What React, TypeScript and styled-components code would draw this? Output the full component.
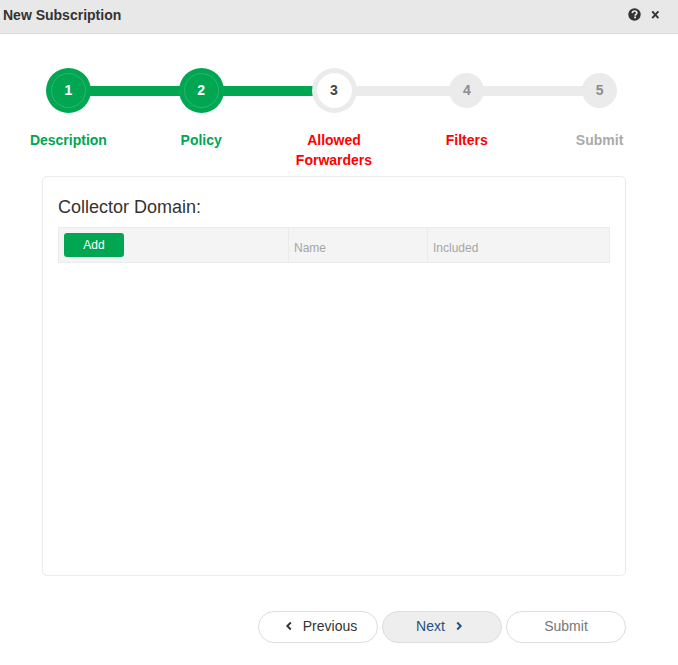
import React from "react";
import styled, { createGlobalStyle, css } from "styled-components";

const GlobalStyle = createGlobalStyle`
  *, *::before, *::after { box-sizing: border-box; }
  body {
    margin: 0;
    background: #fff;
    color: #333;
    font-family: "Liberation Sans", Arial, Helvetica, sans-serif;
    font-size: 14px;
    line-height: 20px;
  }
  button { font-family: inherit; cursor: pointer; }
`;

const green = "#00a651";
const grey = "#ebebeb";

const Dialog = styled.section`
  display: flex;
  flex-direction: column;
  min-height: 100vh;
`;

const TitleBar = styled.header`
  display: flex;
  align-items: center;
  justify-content: space-between;
  height: 34px;
  padding: 0 17px 4px 3px;
  background: #e8e8e8;
  border-bottom: 1px solid #dadada;
`;

const Title = styled.h1`
  margin: 0;
  font-size: 14px;
  line-height: 20px;
`;

const TitleActions = styled.div`
  display: flex;
  align-items: center;
  gap: 8px;
`;

const IconButton = styled.button`
  display: flex;
  padding: 0;
  border: 0;
  background: none;
  color: #333;
`;

const Steps = styled.ol`
  display: grid;
  grid-template-columns: repeat(5, 1fr);
  margin: 0;
  padding: 34px 12px 0 2px;
  list-style: none;
`;

type StepState = "done" | "active" | "pending";
type LineColor = "green" | "grey" | "none";

const Step = styled.li`
  min-width: 0;
  text-align: center;
`;

const MarkerRow = styled.div`
  display: flex;
  align-items: center;
  height: 45px;
`;

const Line = styled.span<{ $color: LineColor }>`
  flex: 1;
  height: 10px;
  background: ${({ $color }) =>
    $color === "green" ? green : $color === "grey" ? grey : "transparent"};
`;

const markerStyles = {
  done: css`
    color: #fff;
    background: ${green};
    border-color: #2cb56e;
    box-shadow: 0 0 0 5px ${green};
  `,
  active: css`
    color: #444;
    background: #fff;
    border-color: #fff;
    box-shadow: 0 0 0 5px ${grey};
  `,
  pending: css`
    color: #8c8c91;
    background: ${grey};
    border-color: ${grey};
  `,
};

const Marker = styled.span<{ $state: StepState }>`
  position: relative;
  z-index: 1;
  width: 35px;
  height: 35px;
  margin: 0 -1px;
  border: 1px solid;
  border-radius: 50%;
  font-weight: bold;
  line-height: 33px;
  ${({ $state }) => markerStyles[$state]}
`;

const StepLabel = styled.div<{ $color: string }>`
  padding: 0 20px;
  margin-top: 17px;
  color: ${({ $color }) => $color};
  font-weight: bold;
`;

const Panel = styled.main`
  flex: 1;
  margin: 6px 52px 0 42px;
  padding: 20px 15px;
  border: 1px solid ${grey};
  border-radius: 5px;
`;

const PanelHeading = styled.h2`
  margin: 0 0 10px;
  font-size: 18px;
  font-weight: normal;
  line-height: 20px;
`;

const Table = styled.table`
  width: 100%;
  table-layout: fixed;
  border-collapse: collapse;
`;

const HeadCell = styled.th<{ $width?: string }>`
  width: ${({ $width }) => $width ?? "auto"};
  height: 35px;
  padding: 5px;
  border: 1px solid ${grey};
  background: #f4f4f4;
  color: #a6a6a6;
  font-size: 12px;
  font-weight: normal;
  line-height: 18px;
  text-align: left;
  vertical-align: bottom;
`;

const AddButton = styled.button`
  display: block;
  width: 60px;
  height: 24px;
  padding: 0;
  border: 0;
  border-radius: 3px;
  background: ${green};
  color: #fff;
  font-size: 12px;
`;

const Footer = styled.footer`
  display: flex;
  justify-content: flex-end;
  gap: 4px;
  padding: 35px 52px 22px 42px;
`;

const pillTones = {
  previous: css`
    padding-left: 6px;
    background: #fff;
    color: #333;
  `,
  next: css`
    padding-right: 5px;
    background: #eee;
    color: #1f5180;
  `,
  submit: css`
    background: #fff;
    color: #777;
  `,
};

const PillButton = styled.button<{ $tone: keyof typeof pillTones }>`
  display: flex;
  align-items: center;
  justify-content: center;
  gap: 10px;
  width: 120px;
  height: 32px;
  padding: 0 0 2px;
  border: 1px solid #ddd;
  border-radius: 16px;
  font-size: 14px;
  ${({ $tone }) => pillTones[$tone]}
`;

const HelpIcon = () => (
  <svg width="13" height="13" viewBox="0 0 13 13" aria-hidden="true">
    <circle cx="6.5" cy="6.5" r="6.2" fill="#333" />
    <path d="M4.3 5.1C4.4 3.7 5.2 3 6.5 3s2.3.8 2.3 1.9c0 1.4-1.7 1.5-1.7 2.9" fill="none" stroke="#e8e8e8" strokeWidth="1.7" />
    <path d="M6.2 8.6H8v1.6H6.2z" fill="#e8e8e8" />
  </svg>
);

const CloseIcon = () => (
  <svg width="12" height="12" viewBox="0 0 12 12" aria-hidden="true">
    <path d="M3.2 2.4l6.2 6.8M9.4 2.4L3.2 9.2" fill="none" stroke="currentColor" strokeWidth="1.9" />
  </svg>
);

const Chevron = ({ left = false }: { left?: boolean }) => (
  <svg width="8" height="10" viewBox="0 0 8 10" aria-hidden="true">
    <path d={left ? "M5.8 1.5L2.3 5l3.5 3.5" : "M2.2 1.5L5.7 5 2.2 8.5"} fill="none" stroke="currentColor" strokeWidth="1.9" />
  </svg>
);

const steps: {
  label: string;
  state: StepState;
  color: string;
  before: LineColor;
  after: LineColor;
}[] = [
  { label: "Description", state: "done", color: green, before: "none", after: "green" },
  { label: "Policy", state: "done", color: green, before: "green", after: "green" },
  { label: "Allowed Forwarders", state: "active", color: "#f00", before: "green", after: "grey" },
  { label: "Filters", state: "pending", color: "#f00", before: "grey", after: "grey" },
  { label: "Submit", state: "pending", color: "#aaa", before: "grey", after: "none" },
];

export default function App() {
  return (
    <>
      <GlobalStyle />
      <Dialog aria-labelledby="dialog-title">
        <TitleBar>
          <Title id="dialog-title">New Subscription</Title>
          <TitleActions>
            <IconButton type="button" aria-label="Help"><HelpIcon /></IconButton>
            <IconButton type="button" aria-label="Close"><CloseIcon /></IconButton>
          </TitleActions>
        </TitleBar>
        <Steps>
          {steps.map((step, i) => (
            <Step key={step.label} aria-current={step.state === "active" ? "step" : undefined}>
              <MarkerRow>
                <Line $color={step.before} />
                <Marker $state={step.state}>{i + 1}</Marker>
                <Line $color={step.after} />
              </MarkerRow>
              <StepLabel $color={step.color}>{step.label}</StepLabel>
            </Step>
          ))}
        </Steps>
        <Panel>
          <PanelHeading>Collector Domain:</PanelHeading>
          <Table>
            <thead>
              <tr>
                <HeadCell $width="230px"><AddButton type="button">Add</AddButton></HeadCell>
                <HeadCell $width="139px" scope="col">Name</HeadCell>
                <HeadCell scope="col">Included</HeadCell>
              </tr>
            </thead>
          </Table>
        </Panel>
        <Footer>
          <PillButton type="button" $tone="previous"><Chevron left />Previous</PillButton>
          <PillButton type="button" $tone="next">Next<Chevron /></PillButton>
          <PillButton type="button" $tone="submit">Submit</PillButton>
        </Footer>
      </Dialog>
    </>
  );
}
